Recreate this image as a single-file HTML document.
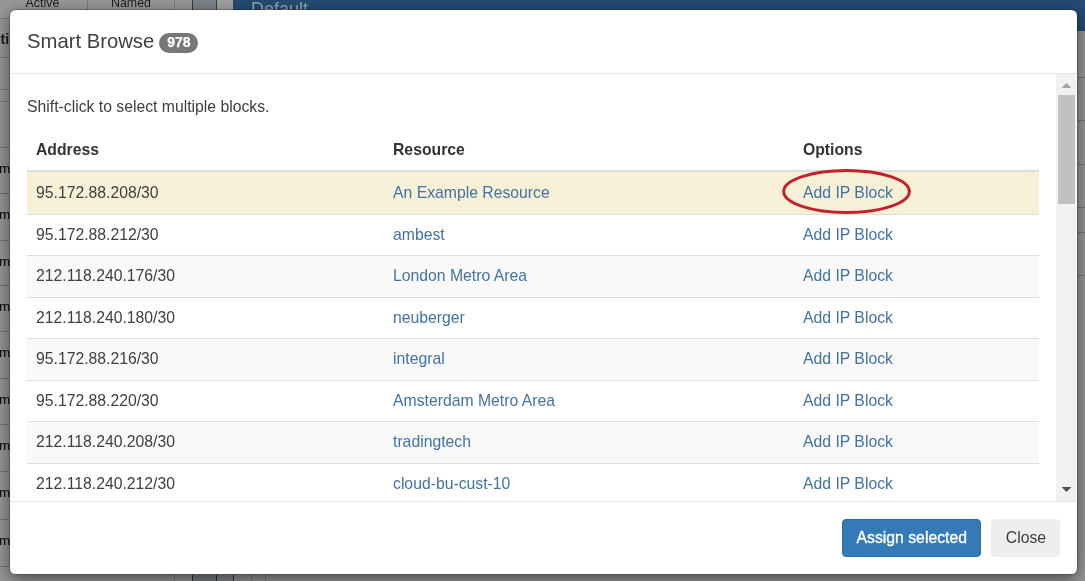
<!DOCTYPE html>
<html><head><meta charset="utf-8">
<style>
*{box-sizing:border-box;margin:0;padding:0}
html,body{width:1085px;height:581px;overflow:hidden;background:#999;font-family:"Liberation Sans",sans-serif;color:#333}
.bg{position:absolute;left:0;top:0;width:1085px;height:581px;overflow:hidden}
.modal{color:#404040;will-change:transform;position:absolute;left:9px;top:9px;width:1069px;height:566px;background:#fff;border:1px solid rgba(0,0,0,.2);background-clip:padding-box;border-radius:6.5px;box-shadow:0 5px 17px rgba(0,0,0,.5);overflow:hidden}
.t{position:absolute;white-space:nowrap}
.r{position:absolute}
a{color:#337ab7;text-decoration:none}
</style></head><body>
<div class="bg" style="will-change:transform">
<div class="r" style="left:193px;top:0px;width:23px;height:18px;background:#80868c"></div>
<div class="r" style="left:217px;top:0px;width:16px;height:18px;background:#a3a3a3"></div>
<div class="r" style="left:87px;top:0px;width:1px;height:18px;background:#7c7c7c"></div>
<div class="r" style="left:174px;top:0px;width:1px;height:18px;background:#7c7c7c"></div>
<div class="r" style="left:192px;top:0px;width:1px;height:18px;background:#3a3a3a"></div>
<div class="r" style="left:216px;top:0px;width:1px;height:18px;background:#3a3a3a"></div>
<div class="t" style="left:25.6px;top:-3.6px;font-size:12.4px;line-height:14px;color:#1c1c1c">Active</div>
<div class="t" style="left:111px;top:-3.6px;font-size:12.4px;line-height:14px;color:#1c1c1c">Named</div>
<div class="r" style="left:233px;top:0px;width:852px;height:31px;background:#264c74"></div>
<div class="t" style="left:251px;top:-0.7px;font-size:18px;line-height:20px;color:#97a4b4">Default</div>
<div class="r" style="left:0px;top:18px;width:9px;height:1px;background:#7a7a7a"></div>
<div class="r" style="left:0px;top:57px;width:9px;height:1px;background:#7a7a7a"></div>
<div class="r" style="left:0px;top:89px;width:9px;height:1px;background:#7a7a7a"></div>
<div class="r" style="left:0px;top:101px;width:9px;height:1px;background:#7a7a7a"></div>
<div class="t" style="left:0.6px;top:31px;font-size:14px;line-height:16px;font-weight:700;color:#1c1c1c">ti</div>
<div class="r" style="left:0px;top:147px;width:9px;height:1px;background:#727272"></div>
<div class="r" style="left:0px;top:193px;width:9px;height:1px;background:#727272"></div>
<div class="r" style="left:0px;top:239.5px;width:9px;height:1px;background:#727272"></div>
<div class="r" style="left:0px;top:285px;width:9px;height:1px;background:#727272"></div>
<div class="r" style="left:0px;top:330.6px;width:9px;height:1px;background:#727272"></div>
<div class="r" style="left:0px;top:377.5px;width:9px;height:1px;background:#727272"></div>
<div class="r" style="left:0px;top:424px;width:9px;height:1px;background:#727272"></div>
<div class="r" style="left:0px;top:471px;width:9px;height:1px;background:#727272"></div>
<div class="r" style="left:0px;top:518.5px;width:9px;height:1px;background:#727272"></div>
<div class="r" style="left:0px;top:566px;width:9px;height:1px;background:#727272"></div>
<div class="t" style="left:-1px;top:162.28px;font-size:13.5px;line-height:14px;color:#111;-webkit-text-stroke:0.2px #111">m</div>
<div class="t" style="left:-1px;top:208.28px;font-size:13.5px;line-height:14px;color:#111;-webkit-text-stroke:0.2px #111">m</div>
<div class="t" style="left:-1px;top:254.78px;font-size:13.5px;line-height:14px;color:#111;-webkit-text-stroke:0.2px #111">m</div>
<div class="t" style="left:-1px;top:300.28px;font-size:13.5px;line-height:14px;color:#111;-webkit-text-stroke:0.2px #111">m</div>
<div class="t" style="left:-1px;top:345.88px;font-size:13.5px;line-height:14px;color:#111;-webkit-text-stroke:0.2px #111">m</div>
<div class="t" style="left:-1px;top:392.78px;font-size:13.5px;line-height:14px;color:#111;-webkit-text-stroke:0.2px #111">m</div>
<div class="t" style="left:-1px;top:439.28px;font-size:13.5px;line-height:14px;color:#111;-webkit-text-stroke:0.2px #111">m</div>
<div class="t" style="left:-1px;top:486.28px;font-size:13.5px;line-height:14px;color:#111;-webkit-text-stroke:0.2px #111">m</div>
<div class="t" style="left:-1px;top:533.78px;font-size:13.5px;line-height:14px;color:#111;-webkit-text-stroke:0.2px #111">m</div>
<div class="r" style="left:1078px;top:77px;width:7px;height:1px;background:#737373"></div>
<div class="r" style="left:1078px;top:120px;width:7px;height:1px;background:#737373"></div>
<div class="r" style="left:1078px;top:164px;width:7px;height:1px;background:#737373"></div>
<div class="r" style="left:1078px;top:207px;width:7px;height:1px;background:#737373"></div>
<div class="r" style="left:1078px;top:232px;width:7px;height:1px;background:#737373"></div>
<div class="r" style="left:1078px;top:275px;width:7px;height:1px;background:#737373"></div>
<div class="r" style="left:193px;top:575px;width:23px;height:6px;background:#7b8188"></div>
<div class="r" style="left:217px;top:575px;width:16px;height:6px;background:#868c92"></div>
<div class="r" style="left:174px;top:575px;width:1px;height:6px;background:#7a7a7a"></div>
<div class="r" style="left:192px;top:575px;width:1px;height:6px;background:#333"></div>
<div class="r" style="left:216px;top:575px;width:1px;height:6px;background:#333"></div>
<div class="r" style="left:233px;top:575px;width:1px;height:6px;background:#333"></div>
<div class="r" style="left:251px;top:575px;width:1px;height:6px;background:#7a7a7a"></div>
<div class="r" style="left:265px;top:575px;width:1px;height:6px;background:#7a7a7a"></div>
</div>
<div class="modal">

<div class="t" style="left:17.00px;top:19.97px;font-size:20.25px;line-height:22.619px;">Smart Browse</div>
<div class="r" style="left:149px;top:23px;width:39px;height:20px;border-radius:10px;background:#777;"></div>
<div class="t" style="left:157.20px;top:24.63px;font-size:14px;line-height:15.638px;font-weight:700;color:#fff;-webkit-text-stroke:0.25px #fff;">978</div>
<div class="r" style="left:0;top:63px;width:1067px;height:1px;background:#e5e5e5"></div>
<div class="r" style="left:0;top:64px;width:1067px;height:427px"><div class="r" style="left:0;top:0;width:1067px;height:427px;overflow:hidden">
<div class="t" style="left:17.00px;top:24.25px;font-size:15.75px;line-height:17.593px;">Shift-click to select multiple blocks.</div>
<div class="t" style="left:26.00px;top:67.25px;font-size:15.75px;line-height:17.593px;font-weight:700;color:#333;">Address</div>
<div class="t" style="left:383.00px;top:67.25px;font-size:15.75px;line-height:17.593px;font-weight:700;color:#333;">Resource</div>
<div class="t" style="left:793.00px;top:67.25px;font-size:15.75px;line-height:17.593px;font-weight:700;color:#333;">Options</div>
<div class="r" style="left:17px;top:98px;width:1012px;height:42px;background:#f6f1d6"></div>
<div class="t" style="left:26.00px;top:109.75px;font-size:15.75px;line-height:17.593px;">95.172.88.208/30</div>
<div class="t" style="left:383.00px;top:109.75px;font-size:15.75px;line-height:17.593px;color:#4273a3;">An Example Resource</div>
<div class="t" style="left:793.00px;top:109.75px;font-size:15.75px;line-height:17.593px;color:#4273a3;">Add IP Block</div>
<div class="r" style="left:17px;top:141px;width:1012px;height:40px;background:#fff"></div>
<div class="r" style="left:17px;top:140px;width:1012px;height:1px;background:#ddd"></div>
<div class="t" style="left:26.00px;top:151.75px;font-size:15.75px;line-height:17.593px;">95.172.88.212/30</div>
<div class="t" style="left:383.00px;top:151.75px;font-size:15.75px;line-height:17.593px;color:#4273a3;">ambest</div>
<div class="t" style="left:793.00px;top:151.75px;font-size:15.75px;line-height:17.593px;color:#4273a3;">Add IP Block</div>
<div class="r" style="left:17px;top:182px;width:1012px;height:41px;background:#f9f9f9"></div>
<div class="r" style="left:17px;top:181px;width:1012px;height:1px;background:#ddd"></div>
<div class="t" style="left:26.00px;top:192.75px;font-size:15.75px;line-height:17.593px;">212.118.240.176/30</div>
<div class="t" style="left:383.00px;top:192.75px;font-size:15.75px;line-height:17.593px;color:#4273a3;">London Metro Area</div>
<div class="t" style="left:793.00px;top:192.75px;font-size:15.75px;line-height:17.593px;color:#4273a3;">Add IP Block</div>
<div class="r" style="left:17px;top:224px;width:1012px;height:40px;background:#fff"></div>
<div class="r" style="left:17px;top:223px;width:1012px;height:1px;background:#ddd"></div>
<div class="t" style="left:26.00px;top:234.75px;font-size:15.75px;line-height:17.593px;">212.118.240.180/30</div>
<div class="t" style="left:383.00px;top:234.75px;font-size:15.75px;line-height:17.593px;color:#4273a3;">neuberger</div>
<div class="t" style="left:793.00px;top:234.75px;font-size:15.75px;line-height:17.593px;color:#4273a3;">Add IP Block</div>
<div class="r" style="left:17px;top:265px;width:1012px;height:41px;background:#f9f9f9"></div>
<div class="r" style="left:17px;top:264px;width:1012px;height:1px;background:#ddd"></div>
<div class="t" style="left:26.00px;top:275.75px;font-size:15.75px;line-height:17.593px;">95.172.88.216/30</div>
<div class="t" style="left:383.00px;top:275.75px;font-size:15.75px;line-height:17.593px;color:#4273a3;">integral</div>
<div class="t" style="left:793.00px;top:275.75px;font-size:15.75px;line-height:17.593px;color:#4273a3;">Add IP Block</div>
<div class="r" style="left:17px;top:307px;width:1012px;height:40px;background:#fff"></div>
<div class="r" style="left:17px;top:306px;width:1012px;height:1px;background:#ddd"></div>
<div class="t" style="left:26.00px;top:317.75px;font-size:15.75px;line-height:17.593px;">95.172.88.220/30</div>
<div class="t" style="left:383.00px;top:317.75px;font-size:15.75px;line-height:17.593px;color:#4273a3;">Amsterdam Metro Area</div>
<div class="t" style="left:793.00px;top:317.75px;font-size:15.75px;line-height:17.593px;color:#4273a3;">Add IP Block</div>
<div class="r" style="left:17px;top:348px;width:1012px;height:41px;background:#f9f9f9"></div>
<div class="r" style="left:17px;top:347px;width:1012px;height:1px;background:#ddd"></div>
<div class="t" style="left:26.00px;top:358.75px;font-size:15.75px;line-height:17.593px;">212.118.240.208/30</div>
<div class="t" style="left:383.00px;top:358.75px;font-size:15.75px;line-height:17.593px;color:#4273a3;">tradingtech</div>
<div class="t" style="left:793.00px;top:358.75px;font-size:15.75px;line-height:17.593px;color:#4273a3;">Add IP Block</div>
<div class="r" style="left:17px;top:390px;width:1012px;height:40px;background:#fff"></div>
<div class="r" style="left:17px;top:389px;width:1012px;height:1px;background:#ddd"></div>
<div class="t" style="left:26.00px;top:400.75px;font-size:15.75px;line-height:17.593px;">212.118.240.212/30</div>
<div class="t" style="left:383.00px;top:400.75px;font-size:15.75px;line-height:17.593px;color:#4273a3;">cloud-bu-cust-10</div>
<div class="t" style="left:793.00px;top:400.75px;font-size:15.75px;line-height:17.593px;color:#4273a3;">Add IP Block</div>
<div class="r" style="left:17px;top:96px;width:1012px;height:2px;background:#ddd"></div>
<div class="r" style="left:1046px;top:0;width:20px;height:427px;background:#f1f1f1"></div>
<div class="r" style="left:1048px;top:21px;width:17px;height:109px;background:#c1c1c1"></div>
<svg class="r" style="left:1046px;top:0" width="20" height="427" viewBox="1056 74 20 427"><polygon points="1061.6,88 1071.4,88 1066.5,83" fill="#a3a3a3"/><polygon points="1061.6,487 1071.4,487 1066.5,492" fill="#505050"/></svg>
<svg class="r" style="left:690px;top:76" width="250" height="90" viewBox="700 150 250 90"><ellipse cx="846.5" cy="191.5" rx="62.8" ry="21" fill="none" stroke="#c41f2b" stroke-width="3"/></svg>
</div></div>
<div class="r" style="left:0;top:491px;width:1067px;height:1px;background:#e5e5e5"></div>
<div class="r" style="left:832px;top:509px;width:139px;height:38px;border-radius:4px;background:#337ab7;border:1px solid #2e6da4"></div>
<div class="t" style="left:846.60px;top:518.75px;font-size:15.75px;line-height:17.593px;color:#fff;-webkit-text-stroke:0.35px #fff;">Assign selected</div>
<div class="r" style="left:981px;top:509px;width:69px;height:38px;border-radius:4px;background:#eee"></div>
<div class="t" style="left:995.80px;top:518.75px;font-size:15.75px;line-height:17.593px;color:#3a3a3a;">Close</div>
</div>
</body></html>
